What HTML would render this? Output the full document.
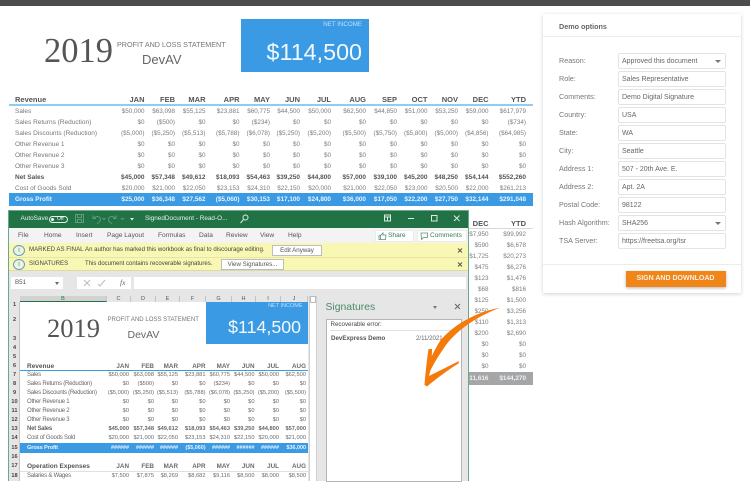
<!DOCTYPE html>
<html><head><meta charset="utf-8"><style>
html,body{margin:0;padding:0}
body{width:750px;height:481px;overflow:hidden;background:#fff;position:relative;font-family:"Liberation Sans",sans-serif;color:#666}
.a,.a *{box-sizing:border-box}
.a{position:absolute;white-space:nowrap}
.r{position:absolute;left:0;height:11px;line-height:11px;width:0;font-size:6.3px;color:#7c7c7c}
.r span{position:absolute;top:0;width:50px;text-align:right;white-space:nowrap}
.r i{position:absolute;top:0;left:15px;font-style:normal;white-space:nowrap;color:#777;font-size:6.5px}
.t span:nth-of-type(1){left:94.5px}.t span:nth-of-type(2){left:125px}.t span:nth-of-type(3){left:155.5px}.t span:nth-of-type(4){left:189.5px}.t span:nth-of-type(5){left:220px}.t span:nth-of-type(6){left:250px}.t span:nth-of-type(7){left:281px}.t span:nth-of-type(8){left:316px}.t span:nth-of-type(9){left:347px}.t span:nth-of-type(10){left:377.5px}.t span:nth-of-type(11){left:408px}.t span:nth-of-type(12){left:438.5px}.t span:nth-of-type(13){left:476px}
.b,.b i{font-weight:bold;color:#555;font-size:6.5px}
.h,.h i{font-weight:bold;color:#555;font-size:7.5px}
.w,.w i{font-weight:bold;color:#e8f3fc;font-size:6.4px}
.x{font-size:5.7px;color:#6a6a6a}
.x i{left:27px;font-size:6px;letter-spacing:-.22px;color:#666}
.x span:nth-of-type(1){left:79px}.x span:nth-of-type(2){left:104px}.x span:nth-of-type(3){left:128px}.x span:nth-of-type(4){left:155.5px}.x span:nth-of-type(5){left:180px}.x span:nth-of-type(6){left:204.5px}.x span:nth-of-type(7){left:229px}.x span:nth-of-type(8){left:256px}
.x.b{font-size:5.7px}.x.b i{font-size:6px}
.x.w{font-size:5.4px;color:#e8f3fc}.x.w i{font-size:5.8px;color:#e8f3fc}
.x.h{font-size:6.3px}.x.h i{font-size:6.5px;letter-spacing:0;color:#555}
.d span:nth-of-type(1){left:438.5px}.d span:nth-of-type(2){left:476px}
.l{position:absolute;left:559px;font-size:7.2px;color:#777;height:16px;line-height:16px}
.f{position:absolute;box-sizing:border-box;left:617.5px;width:108px;height:16.5px;border:1px solid #e3e3e3;border-radius:2px;font-size:7px;line-height:15px;padding:.5px 0 0 3.5px;color:#666;background:#fff}
.f u{position:absolute;right:4px;top:6px;width:0;height:0;border:3px solid transparent;border-top:3px solid #777;border-bottom:0}
.tab{position:absolute;top:228px;height:15px;line-height:15px;font-size:6.6px;color:#555}
.rn{position:absolute;left:9px;width:11px;text-align:center;font-size:5.6px;font-weight:bold;color:#444;height:9px;line-height:9px}
.ch{position:absolute;box-sizing:border-box;top:296px;height:6px;line-height:7px;font-size:5.5px;color:#555;text-align:center;overflow:hidden;border-right:1px solid #c4c4c4}
</style></head><body>

<div class="a" style="left:0;top:0;width:750px;height:6px;background:#4d4d4d"></div>

<!-- top sheet header -->
<div class="a" style="left:44px;top:32px;font-family:'Liberation Serif',serif;font-size:34.5px;line-height:38px;color:#555">2019</div>
<div class="a" style="left:117px;top:39px;font-size:7.2px;line-height:11px;color:#777">PROFIT AND LOSS STATEMENT</div>
<div class="a" style="left:142px;top:52px;font-size:13px;line-height:16px;color:#666">DevAV</div>
<div class="a" style="left:241px;top:19px;width:128px;height:53px;background:#3a9ae4"></div>
<div class="a" style="left:300px;top:20px;width:62px;text-align:right;font-size:6.2px;line-height:9px;color:#bfe0f8">NET INCOME</div>
<div class="a" style="left:250px;top:37px;width:112px;text-align:right;font-size:23.3px;line-height:30px;color:#f2f8fd">$114,500</div>

<!-- top table -->
<div class="a" style="left:9px;top:104px;width:524px;height:2px;background:#8ccdf5"></div>
<div class="a" style="left:9px;top:193px;width:524px;height:13px;background:#3a9ae4"></div>
<div class="r t h" style="top:94px"><i>Revenue</i><span>JAN</span><span>FEB</span><span>MAR</span><span>APR</span><span>MAY</span><span>JUN</span><span>JUL</span><span>AUG</span><span>SEP</span><span>OCT</span><span>NOV</span><span>DEC</span><span>YTD</span></div>
<div class="r t" style="top:106px"><i>Sales</i><span>$50,000</span><span>$63,098</span><span>$55,125</span><span>$23,881</span><span>$60,775</span><span>$44,500</span><span>$50,000</span><span>$62,500</span><span>$44,850</span><span>$51,000</span><span>$53,250</span><span>$59,000</span><span>$617,979</span></div>
<div class="r t" style="top:116.5px"><i>Sales Returns (Reduction)</i><span>$0</span><span>($500)</span><span>$0</span><span>$0</span><span>($234)</span><span>$0</span><span>$0</span><span>$0</span><span>$0</span><span>$0</span><span>$0</span><span>$0</span><span>($734)</span></div>
<div class="r t" style="top:127.5px"><i>Sales Discounts (Reduction)</i><span>($5,000)</span><span>($5,250)</span><span>($5,513)</span><span>($5,788)</span><span>($6,078)</span><span>($5,250)</span><span>($5,200)</span><span>($5,500)</span><span>($5,750)</span><span>($5,800)</span><span>($5,000)</span><span>($4,856)</span><span>($64,985)</span></div>
<div class="r t" style="top:138.5px"><i>Other Revenue 1</i><span>$0</span><span>$0</span><span>$0</span><span>$0</span><span>$0</span><span>$0</span><span>$0</span><span>$0</span><span>$0</span><span>$0</span><span>$0</span><span>$0</span><span>$0</span></div>
<div class="r t" style="top:149.5px"><i>Other Revenue 2</i><span>$0</span><span>$0</span><span>$0</span><span>$0</span><span>$0</span><span>$0</span><span>$0</span><span>$0</span><span>$0</span><span>$0</span><span>$0</span><span>$0</span><span>$0</span></div>
<div class="r t" style="top:160.5px"><i>Other Revenue 3</i><span>$0</span><span>$0</span><span>$0</span><span>$0</span><span>$0</span><span>$0</span><span>$0</span><span>$0</span><span>$0</span><span>$0</span><span>$0</span><span>$0</span><span>$0</span></div>
<div class="r t b" style="top:171.5px"><i>Net Sales</i><span>$45,000</span><span>$57,348</span><span>$49,612</span><span>$18,093</span><span>$54,463</span><span>$39,250</span><span>$44,800</span><span>$57,000</span><span>$39,100</span><span>$45,200</span><span>$48,250</span><span>$54,144</span><span>$552,260</span></div>
<div class="r t" style="top:182.5px"><i>Cost of Goods Sold</i><span>$20,000</span><span>$21,000</span><span>$22,050</span><span>$23,153</span><span>$24,310</span><span>$22,150</span><span>$20,000</span><span>$21,000</span><span>$22,050</span><span>$23,000</span><span>$20,500</span><span>$22,000</span><span>$261,213</span></div>
<div class="r t w" style="top:194px"><i>Gross Profit</i><span>$25,000</span><span>$36,348</span><span>$27,562</span><span>($5,060)</span><span>$30,153</span><span>$17,100</span><span>$24,800</span><span>$36,000</span><span>$17,050</span><span>$22,200</span><span>$27,750</span><span>$32,144</span><span>$291,048</span></div>

<!-- continuation right of window -->
<div class="a" style="left:469px;top:228px;width:64px;height:1px;background:#d9d9d9"></div>
<div class="a" style="left:469px;top:372px;width:64px;height:13px;background:#a6a6a6"></div>
<div class="r d h" style="top:217.5px"><span>DEC</span><span>YTD</span></div>
<div class="r d" style="top:229px"><span>$7,950</span><span>$99,992</span></div>
<div class="r d" style="top:240px"><span>$590</span><span>$6,678</span></div>
<div class="r d" style="top:251px"><span>$1,725</span><span>$20,273</span></div>
<div class="r d" style="top:262px"><span>$475</span><span>$6,276</span></div>
<div class="r d" style="top:273px"><span>$123</span><span>$1,476</span></div>
<div class="r d" style="top:284px"><span>$68</span><span>$816</span></div>
<div class="r d" style="top:295px"><span>$125</span><span>$1,500</span></div>
<div class="r d" style="top:306px"><span>$250</span><span>$3,256</span></div>
<div class="r d" style="top:317px"><span>$110</span><span>$1,313</span></div>
<div class="r d" style="top:328px"><span>$200</span><span>$2,690</span></div>
<div class="r d" style="top:339px"><span>$0</span><span>$0</span></div>
<div class="r d" style="top:350px"><span>$0</span><span>$0</span></div>
<div class="r d" style="top:361px"><span>$0</span><span>$0</span></div>
<div class="r d w" style="top:373px"><span>11,616</span><span>$144,270</span></div>

<!-- demo options panel -->
<div class="a" style="left:543px;top:14px;width:198px;height:279px;background:#fff;box-shadow:0 1px 4px rgba(0,0,0,.18)"></div>
<div class="a" style="left:543px;top:36px;width:198px;height:1px;background:#ececec"></div>
<div class="a" style="left:559px;top:22px;font-size:7.2px;line-height:10px;font-weight:bold;color:#666">Demo options</div>
<div class="l" style="top:52.5px">Reason:</div><div class="f" style="top:52.5px">Approved this document<u></u></div>
<div class="l" style="top:70.5px">Role:</div><div class="f" style="top:70.5px">Sales Representative</div>
<div class="l" style="top:88.5px">Comments:</div><div class="f" style="top:88.5px">Demo Digital Signature</div>
<div class="l" style="top:106.5px">Country:</div><div class="f" style="top:106.5px">USA</div>
<div class="l" style="top:124.5px">State:</div><div class="f" style="top:124.5px">WA</div>
<div class="l" style="top:142.5px">City:</div><div class="f" style="top:142.5px">Seattle</div>
<div class="l" style="top:160.5px">Address 1:</div><div class="f" style="top:160.5px">507 - 20th Ave. E.</div>
<div class="l" style="top:178.5px">Address 2:</div><div class="f" style="top:178.5px">Apt. 2A</div>
<div class="l" style="top:196.5px">Postal Code:</div><div class="f" style="top:196.5px">98122</div>
<div class="l" style="top:214.5px">Hash Algorithm:</div><div class="f" style="top:214.5px">SHA256<u></u></div>
<div class="l" style="top:232.5px">TSA Server:</div><div class="f" style="top:232.5px">https://freetsa.org/tsr</div>
<div class="a" style="left:543px;top:264px;width:198px;height:1px;background:#ececec"></div>
<div class="a" style="left:625.5px;top:271px;width:100px;height:16px;background:#f0851a;color:#fdeedd;font-size:7px;font-weight:bold;line-height:16px;text-align:center;box-shadow:0 1px 3px rgba(0,0,0,.3)">SIGN AND DOWNLOAD</div>

<!-- excel window -->
<div class="a" style="left:8px;top:210px;width:461px;height:271px;background:#e6e6e6;border:1px solid #6aa88a;border-bottom:0"></div>
<div class="a" style="left:9px;top:211px;width:459px;height:17px;background:#217346"></div>
<div class="a" style="left:20.5px;top:214px;font-size:6.4px;line-height:10px;color:#e4f0e9">AutoSave</div>
<div class="a" style="left:49px;top:215.5px;width:19px;height:7px;border:1px solid #e4f0e9;border-radius:4px"></div>
<div class="a" style="left:51px;top:217.5px;width:3px;height:3px;border-radius:50%;background:#fff"></div>
<div class="a" style="left:57px;top:215.5px;font-size:5px;line-height:7px;color:#fff">Off</div>
<svg class="a" style="left:74px;top:213px" width="66" height="12" viewBox="0 0 66 12" fill="none" stroke="#5f9a7c" stroke-width="1"><rect x="1.5" y="1.5" width="8" height="8"/><path d="M3.5 1.5v3h4v-3M3.5 9.5v-3h4v3"/><path d="M19 2.5v3h3M19.5 5.5c3-3.5 7-2 7 1 0 2-2 3.5-3.5 4"/><path d="M28.5 5l1.5 1.5L31.5 5"/><path d="M42 2.5v3h-3M41.5 5.500c-3-3.500-7-2-7 1 0 2 2 3.500 3.500 4"/><path d="M47 5l1.500 1.500L50 5"/><path d="M56 5h4l-2 2.500z" fill="#e4f0e9" stroke="none"/></svg>
<div class="a" style="left:145px;top:214px;font-size:6.4px;line-height:10px;color:#e4f0e9">SignedDocument  -  Read-O...</div>
<svg class="a" style="left:238px;top:212px" width="226" height="14" viewBox="0 0 226 14" fill="none" stroke="#dcebe3" stroke-width="1"><circle cx="7.5" cy="5.5" r="2.5"/><path d="M5.500 7.500L2.500 11"/><rect x="146.500" y="3" width="6" height="6"/><path d="M146.500 5h6M149.500 5v4"/><path d="M170 6.500h6"/><rect x="193.500" y="3.500" width="5.500" height="5.500"/><path d="M216 3.500l5.500 5.500M221.500 3.500L216 9"/></svg>

<div class="a" style="left:9px;top:228px;width:459px;height:15px;background:#f3f3f3"></div>
<div class="tab" style="left:18px">File</div><div class="tab" style="left:44px">Home</div><div class="tab" style="left:76px">Insert</div><div class="tab" style="left:107px">Page Layout</div><div class="tab" style="left:158px">Formulas</div><div class="tab" style="left:199px">Data</div><div class="tab" style="left:226px">Review</div><div class="tab" style="left:260px">View</div><div class="tab" style="left:288px">Help</div>
<div class="a" style="left:375px;top:230px;width:39px;height:12px;background:#fff;border:1px solid #ececec;font-size:6.6px;line-height:10px;padding-left:12px;color:#2f7d57">Share</div>
<svg class="a" style="left:378px;top:232px" width="9" height="8" fill="none" stroke="#5c8f77" stroke-width=".8"><path d="M1 3.500h1.500v4H1zM2.500 3.500L5 1v2h3l-.5 4.500h-5"/></svg>
<div class="a" style="left:417px;top:230px;width:50px;height:12px;background:#fff;border:1px solid #ececec;font-size:6.600px;line-height:10px;padding-left:12px;color:#2f7d57">Comments</div>
<svg class="a" style="left:420px;top:232px" width="9" height="8" fill="none" stroke="#5c8f77" stroke-width=".8"><path d="M1 1h6.500v4.500H3.500L1.500 7.500z"/></svg>

<div class="a" style="left:9px;top:243px;width:459px;height:28px;background:#f8f8b4;border-bottom:1px solid #dcdc9c"></div>
<div class="a" style="left:9px;top:257px;width:459px;height:1px;background:#e6e6a2"></div>
<div class="a" style="left:13px;top:245px;width:12px;height:11px;border-radius:50%;border:1px solid #6a9cc8;background:#eef4dc;color:#4f8cc0;font-size:7px;line-height:9px;text-align:center">i</div>
<div class="a" style="left:13px;top:259px;width:12px;height:11px;border-radius:50%;border:1px solid #6a9cc8;background:#eef4dc;color:#4f8cc0;font-size:7px;line-height:9px;text-align:center">i</div>
<div class="a" style="left:29px;top:245px;font-size:6.1px;line-height:10px;color:#444">MARKED AS FINAL</div>
<div class="a" style="left:85px;top:245px;font-size:6.1px;line-height:10px;color:#444">An author has marked this workbook as final to discourage editing.</div>
<div class="a" style="left:272px;top:245px;width:50px;height:11px;background:#fff;border:1px solid #bdbdbd;font-size:6.200px;line-height:9px;text-align:center;color:#555">Edit Anyway</div>
<div class="a" style="left:29px;top:259px;font-size:6.1px;line-height:10px;color:#444">SIGNATURES</div>
<div class="a" style="left:85px;top:259px;font-size:6px;line-height:10px;color:#444">This document contains recoverable signatures.</div>
<div class="a" style="left:221px;top:259px;width:63px;height:11px;background:#fff;border:1px solid #bdbdbd;font-size:6.200px;line-height:9px;text-align:center;color:#555">View Signatures...</div>
<svg class="a" style="left:456px;top:247px" width="8" height="20" fill="none" stroke="#555" stroke-width="1"><path d="M2 1.500l4 4M6 1.500l-4 4M2 15.500l4 4M6 15.500l-4 4"/></svg>

<!-- formula bar -->
<div class="a" style="left:11px;top:277px;width:52px;height:12px;background:#fff;font-size:6.2px;line-height:12px;padding-left:4px;color:#555">B51</div>
<div class="a" style="left:55px;top:282px;width:0;height:0;border:2px solid transparent;border-top:3px solid #666;border-bottom:0"></div>
<div class="a" style="left:77px;top:277px;width:54px;height:12px;background:#fff"></div>
<svg class="a" style="left:83px;top:279px" width="46" height="9" fill="none" stroke="#bdbdbd" stroke-width="1"><path d="M1 1l6 6M7 1L1 7M15 5l2 2 5-6"/></svg>
<div class="a" style="left:120px;top:277px;font-family:'Liberation Serif',serif;font-style:italic;font-size:7.500px;line-height:12px;color:#666">fx</div>
<div class="a" style="left:134px;top:277px;width:332px;height:12px;background:#fff"></div>

<!-- column headers -->
<div class="a" style="left:9px;top:296px;width:300px;height:6px;background:#e6e6e6"></div>
<div class="ch" style="left:20px;width:87px;background:#d2d2d2;border-bottom:1px solid #217346;color:#217346">B</div>
<div class="ch" style="left:107px;width:24px">C</div><div class="ch" style="left:131px;width:25px">D</div><div class="ch" style="left:156px;width:24px">E</div><div class="ch" style="left:180px;width:26px">F</div><div class="ch" style="left:206px;width:26px">G</div><div class="ch" style="left:232px;width:24px">H</div><div class="ch" style="left:256px;width:25px">I</div><div class="ch" style="left:281px;width:27px">J</div>

<!-- sheet -->
<div class="a" style="left:20px;top:302px;width:288px;height:179px;background:#fff"></div>
<div class="a" style="left:206px;top:302px;width:102px;height:41.500px;background:#3a9ae4"></div>
<div class="a" style="left:260px;top:302px;width:42.500px;text-align:right;font-size:5.500px;line-height:8px;color:#c4e2f8">NET INCOME</div>
<div class="a" style="left:210px;top:314px;width:91px;text-align:right;font-size:17.8px;line-height:26px;color:#f2f8fd">$114,500</div>
<div class="a" style="left:47px;top:312px;font-family:'Liberation Serif',serif;font-size:26.500px;line-height:32px;color:#555">2019</div>
<div class="a" style="left:107.500px;top:316px;font-size:6.05px;line-height:9px;color:#777">PROFIT AND LOSS STATEMENT</div>
<div class="a" style="left:127.500px;top:328px;font-size:10.500px;line-height:14px;color:#666">DevAV</div>

<div class="a" style="left:20px;top:370px;width:288px;height:1px;background:#3a9ae4"></div>
<div class="a" style="left:20px;top:443px;width:288px;height:10px;background:#3a9ae4"></div>
<div class="a" style="left:20px;top:471px;width:288px;height:1px;background:#e0e0e0"></div>

<div class="r x h" style="top:360.500px"><i>Revenue</i><span>JAN</span><span>FEB</span><span>MAR</span><span>APR</span><span>MAY</span><span>JUN</span><span>JUL</span><span>AUG</span></div>
<div class="r x" style="top:370px"><i>Sales</i><span>$50,000</span><span>$63,098</span><span>$55,125</span><span>$23,881</span><span>$60,775</span><span>$44,500</span><span>$50,000</span><span>$62,500</span></div>
<div class="r x" style="top:379px"><i>Sales Returns (Reduction)</i><span>$0</span><span>($500)</span><span>$0</span><span>$0</span><span>($234)</span><span>$0</span><span>$0</span><span>$0</span></div>
<div class="r x" style="top:388px"><i>Sales Discounts (Reduction)</i><span>($5,000)</span><span>($5,250)</span><span>($5,513)</span><span>($5,788)</span><span>($6,078)</span><span>($5,250)</span><span>($5,200)</span><span>($5,500)</span></div>
<div class="r x" style="top:397px"><i>Other Revenue 1</i><span>$0</span><span>$0</span><span>$0</span><span>$0</span><span>$0</span><span>$0</span><span>$0</span><span>$0</span></div>
<div class="r x" style="top:406px"><i>Other Revenue 2</i><span>$0</span><span>$0</span><span>$0</span><span>$0</span><span>$0</span><span>$0</span><span>$0</span><span>$0</span></div>
<div class="r x" style="top:415px"><i>Other Revenue 3</i><span>$0</span><span>$0</span><span>$0</span><span>$0</span><span>$0</span><span>$0</span><span>$0</span><span>$0</span></div>
<div class="r x b" style="top:424px"><i>Net Sales</i><span>$45,000</span><span>$57,348</span><span>$49,612</span><span>$18,093</span><span>$54,463</span><span>$39,250</span><span>$44,800</span><span>$57,000</span></div>
<div class="r x" style="top:433px"><i>Cost of Goods Sold</i><span>$20,000</span><span>$21,000</span><span>$22,050</span><span>$23,153</span><span>$24,310</span><span>$22,150</span><span>$20,000</span><span>$21,000</span></div>
<div class="r x w" style="top:442.500px"><i>Gross Profit</i><span>######</span><span>######</span><span>######</span><span>($5,060)</span><span>######</span><span>######</span><span>######</span><span>$36,000</span></div>
<div class="r x h" style="top:461px"><i>Operation Expenses</i><span>JAN</span><span>FEB</span><span>MAR</span><span>APR</span><span>MAY</span><span>JUN</span><span>JUL</span><span>AUG</span></div>
<div class="r x" style="top:471px"><i>Salaries &amp; Wages</i><span>$7,500</span><span>$7,875</span><span>$8,269</span><span>$8,682</span><span>$9,116</span><span>$8,500</span><span>$8,000</span><span>$8,500</span></div>

<!-- row numbers -->
<div class="a" style="left:9px;top:302px;width:11px;height:179px;background:#e6e6e6;border-right:1px solid #c4c4c4"></div>
<div class="rn" style="top:301px">1</div><div class="rn" style="top:316px">2</div><div class="rn" style="top:335px">3</div><div class="rn" style="top:344px">4</div><div class="rn" style="top:353px">5</div><div class="rn" style="top:362px">6</div><div class="rn" style="top:371px">7</div><div class="rn" style="top:380px">8</div><div class="rn" style="top:389px">9</div><div class="rn" style="top:398px">10</div><div class="rn" style="top:407px">11</div><div class="rn" style="top:416px">12</div><div class="rn" style="top:425px">13</div><div class="rn" style="top:434px">14</div><div class="rn" style="top:444px">15</div><div class="rn" style="top:453px">16</div><div class="rn" style="top:462px">17</div><div class="rn" style="top:472px">18</div>

<!-- scrollbar -->
<div class="a" style="left:309px;top:296px;width:8px;height:185px;background:#fff;border-left:1px solid #d0d0d0;border-right:1px solid #d0d0d0"></div>
<div class="a" style="left:310px;top:296px;width:6px;height:7px;background:#fff;border:1px solid #bbb"></div>

<!-- signatures pane -->
<div class="a" style="left:325.500px;top:300px;font-size:10.4px;line-height:15px;color:#4a8a6c">Signatures</div>
<div class="a" style="left:433px;top:306px;width:0;height:0;border:2.500px solid transparent;border-top:3px solid #777;border-bottom:0"></div>
<svg class="a" style="left:454px;top:303px" width="8" height="8" fill="none" stroke="#666" stroke-width="1"><path d="M1 1l5 5M6 1L1 6"/></svg>
<div class="a" style="left:325.500px;top:318.500px;width:136px;height:163px;background:#fff;border:1px solid #b5b5b5"></div>
<div class="a" style="left:330.500px;top:319.500px;font-size:6.200px;line-height:10px;color:#444">Recoverable error:</div>
<div class="a" style="left:329.500px;top:330px;width:127px;height:1px;background:#e2e2e2"></div>
<div class="a" style="left:331px;top:333.500px;font-size:6.200px;line-height:10px;font-weight:bold;color:#555">DevExpress Demo</div>
<div class="a" style="left:416px;top:333.500px;font-size:6.100px;line-height:10px;color:#666">2/11/2021</div>

<!-- arrow -->
<svg class="a" style="left:0;top:0" width="750" height="481" viewBox="0 0 750 481">
<path d="M500.500 307.500C478 316 458 329 446 345C439 355 432 366 429.500 373L426.500 371C429 362 433 352 440 341C453 325 476 312 500.500 307.500Z" fill="#f47b0a"/>
<path d="M428.500 349L432 349C432 358 431 369 429 376L459 361L458.500 363.500C448 370 437 378 427 386.500L424.500 385C425.500 372 427 359 428.500 349Z" fill="#f47b0a"/>
</svg>
</body></html>
